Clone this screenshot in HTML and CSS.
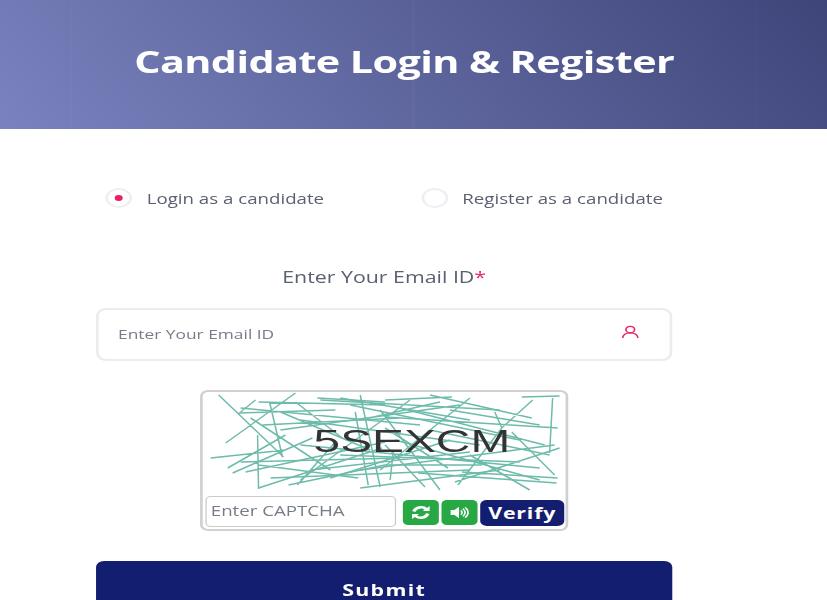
FILE: index.html
```html
<!DOCTYPE html>
<html lang="en">
<head>
<meta charset="UTF-8">
<meta name="viewport" content="width=device-width, initial-scale=1.0">
<title>Candidate Login</title>
<link rel="stylesheet" href="styles.css">
</head>
<body>

<div class="page">

  <!-- Page banner -->
  <header class="banner">
    <h1>Candidate Login &amp; Register</h1>
  </header>

  <form class="login-form">

    <!-- Login or register choice -->
    <div class="choice-row">
      <label class="choice">
        <span class="radio radio-on"></span>
        <span>Login as a candidate</span>
      </label>
      <label class="choice">
        <span class="radio"></span>
        <span>Register as a candidate</span>
      </label>
    </div>

    <p class="field-label">Enter Your Email ID<span class="required">*</span></p>

    <div class="email-field">
      <span class="placeholder">Enter Your Email ID</span>
      <svg class="user-icon" viewBox="0 0 16 16" fill="none" stroke="#e91e63" stroke-width="1.5">
        <circle cx="8" cy="5" r="4"/>
        <path d="M1 15.500c0-4 2.800-6.500 7-6.500s7 2.500 7 6.500"/>
      </svg>
    </div>

    <!-- Captcha box -->
    <div class="captcha">
      <div class="captcha-image">
        <svg class="captcha-lines" viewBox="202 392 364 100" preserveAspectRatio="none">
          <path d="M218 395L283 457M295 393L225 443M255 400L240 412M269 402L282 457M257 435L258 489M210 458L285 450M227 468L285 435M232 473L312 438M245 472L385 442M258 488L382 448M258 465L358 478M288 485L385 465M297 485L335 442M238 413L335 410M258 402L385 405M317 398L385 402M295 402L342 438M360 395L380 487M355 412L368 485M430 395L532 418M385 400L452 397M522 397L560 396M553 398L550 453M533 400L502 428M502 428L458 485M385 417L558 428M385 445L425 487M393 452L390 480M385 465L482 465M455 482L560 448M462 472L558 478M418 473L557 483M495 412L502 428M512 432L555 475M385 428L448 468M262 425L400 418M300 420L480 445M340 455L520 462M240 408L420 425M400 408L545 445M310 470L470 452"/>
          <path d="M320 400L500 410M350 405L520 440M280 430L460 405M340 398L470 420M410 400L300 480M470 398L380 470M430 430L550 455M300 445L540 468M270 478L470 470M330 478L450 440M380 410L440 490M250 418L330 470M450 410L540 425M360 470L555 445M395 440L540 480M440 402L360 420M240 462L400 458M280 412L370 450M470 455L530 490M360 488L500 470"/>
        </svg>
        <span class="captcha-code">5SEXCM</span>
      </div>
      <div class="captcha-controls">
        <div class="captcha-input">Enter CAPTCHA</div>
        <button type="button" class="icon-button">
          <svg viewBox="0 0 16 16" fill="none" stroke="#fff" stroke-width="2.800">
            <path d="M2.500 7a5.700 5.700 0 0 1 10-2.500"/>
            <path d="M13.500 9a5.700 5.700 0 0 1-10 2.500"/>
            <path d="M15 1v5.500h-5.500z" fill="#fff" stroke="none"/>
            <path d="M1 15v-5.500h5.500z" fill="#fff" stroke="none"/>
          </svg>
        </button>
        <button type="button" class="icon-button">
          <svg viewBox="0 0 18 16">
            <path d="M1 5h3.500l4-4v14l-4-4h-3.500z" fill="#fff"/>
            <path d="M10 5.500a3 3 0 0 1 0 5M12 3.500a6 6 0 0 1 0 9M14 1.800a8.500 8.500 0 0 1 0 12.400" fill="none" stroke="#fff" stroke-width="1.500"/>
          </svg>
        </button>
        <button type="button" class="verify-button">Verify</button>
      </div>
    </div>

    <button type="button" class="submit-button">Submit</button>

  </form>
</div>

</body>
</html>
```

FILE: styles.css
```css
/* The reference is stretched sideways, so the whole page is too */
html, body {
  margin: 0;
  height: 600px;
  overflow: hidden;
  background-color: #fff;
}

.page {
  width: 620px;
  transform: scaleX(1.3339);
  transform-origin: 0 0;
  font-family: "Open Sans", sans-serif;
  color: #5a6070;
}

/* Style for banner */
.banner {
  height: 129px;
  box-sizing: border-box;
  display: flex;
  align-items: center;
  justify-content: center;
  padding: 0 14px 7px 0;
  background-image:
    repeating-linear-gradient(90deg, rgba(255, 255, 255, 0.025) 0 1px, transparent 1px 256.4px),
    linear-gradient(55deg, #7b83bf 0%, #3e4579 100%);
  background-position: 53px 0, 0 0;
}

.banner h1 {
  margin: 0;
  font-size: 31px;
  font-weight: 700;
  letter-spacing: -0.45px;
  color: #fff;
}

/* Style for form */
.login-form {
  width: 432px;
  margin: 59px 0 0 72px;
}

.choice-row {
  display: flex;
  justify-content: space-between;
  padding: 0 7px 0 7px;
}

.choice {
  display: flex;
  align-items: center;
  gap: 11px;
  height: 20px;
  font-size: 14px;
}

.radio {
  width: 20px;
  height: 20px;
  box-sizing: border-box;
  border: 2px solid #eceff3;
  border-radius: 50%;
  display: flex;
  align-items: center;
  justify-content: center;
}

.radio-on::after {
  content: "";
  width: 6px;
  height: 6px;
  border-radius: 50%;
  background-color: #e91e63;
}

.field-label {
  margin: 57px 0 19px;
  font-size: 16px;
  line-height: 24px;
  text-align: center;
}

.required {
  color: #e91e63;
}

.email-field {
  height: 53px;
  box-sizing: border-box;
  border: 2px solid #e9edef;
  border-radius: 8px;
  display: flex;
  align-items: center;
  justify-content: space-between;
  padding: 0 23px 2px 14.500px;
  font-size: 13px;
  color: #777d88;
}

.user-icon {
  width: 13px;
  height: 16px;
  margin-bottom: 3px;
}

/* Style for captcha */
.captcha {
  width: 276px;
  height: 141px;
  box-sizing: border-box;
  margin: 29px 0 0 78px;
  border: 2px solid #d0d0d0;
  border-radius: 6px;
  overflow: hidden;
}

.captcha-image {
  position: relative;
  height: 100px;
  display: flex;
  align-items: center;
  justify-content: center;
  padding-left: 41px;
  box-sizing: border-box;
}

.captcha-code {
  position: relative;
  font-family: "Liberation Sans", sans-serif;
  font-size: 32px;
  color: #333;
  margin-bottom: 2px;
  transform: scaleX(1.12);
}

.captcha-lines {
  position: absolute;
  top: 0;
  left: 0;
  width: 100%;
  height: 100%;
  fill: none;
  stroke: #6dbbab;
  stroke-width: 1.500;
}

.captcha-controls {
  display: flex;
  align-items: center;
  gap: 2px;
  margin-top: 4px;
  padding-left: 2px;
}

.captcha-input {
  width: 143px;
  height: 31px;
  box-sizing: border-box;
  border: 1.500px solid #ccc;
  border-radius: 4px;
  margin-right: 3px;
  padding-left: 3px;
  font-size: 14px;
  line-height: 27px;
  color: #777d88;
}

.icon-button {
  width: 27px;
  height: 25px;
  margin-top: 1px;
  padding: 0;
  border: none;
  border-radius: 4px;
  background-color: #28a745;
  display: flex;
  align-items: center;
  justify-content: center;
}

.icon-button svg {
  width: 15px;
  height: 15px;
}

.verify-button {
  width: 63px;
  height: 26px;
  margin-top: 2px;
  padding: 0;
  border: none;
  border-radius: 5px;
  background-color: #141e70;
  color: #fff;
  font-family: "Open Sans", sans-serif;
  font-size: 16px;
  font-weight: 700;
  letter-spacing: 0.6px;
}

/* Style for submit */
.submit-button {
  display: block;
  width: 432px;
  height: 56px;
  margin-top: 30px;
  padding-top: 3px;
  border: none;
  border-radius: 6px;
  background-color: #141e70;
  color: #fff;
  font-family: "Open Sans", sans-serif;
  font-size: 16px;
  font-weight: 700;
  letter-spacing: 1px;
}
```
